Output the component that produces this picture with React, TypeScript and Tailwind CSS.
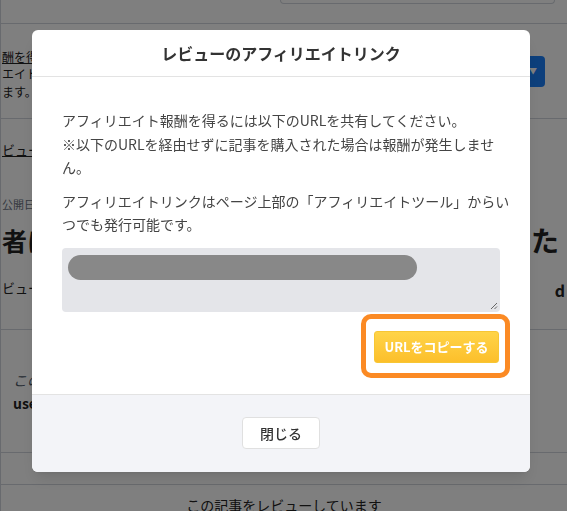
import React from "react";

const jp = "font-['Noto_Sans_CJK_JP','Noto_Sans',sans-serif]";

const BackgroundPage = () => {
  return (
    <div className="flex h-[511px] w-full flex-col overflow-hidden border-l border-gray-300 bg-white text-[#222]">
      <div className="flex h-[24px] shrink-0 justify-end border-b border-gray-300 pr-[12px]">
        <div className="h-[4px] w-[275px] rounded-b-md border-x border-b border-gray-300" />
      </div>
      <div className="flex h-[95px] shrink-0 items-center justify-between border-b border-gray-300 pr-[22px]">
        <div className="flex flex-col pl-[1px] pt-[6px] text-[12px] leading-[17.5px]">
          <span className="underline">酬を得るには以下のURL</span>
          <span>エイトリンク</span>
          <span>ます。</span>
        </div>
        <div className="flex h-[31px] w-[56px] items-center justify-end rounded-[4px] bg-[#1a7ff8] pr-[8px] text-[8px] text-white">
          ▼
        </div>
      </div>
      <div className="flex h-[211px] shrink-0 flex-col border-b border-gray-300 pl-[1px] pr-[8px]">
        <span className="mt-[21px] text-[13px] underline">ビュー記事</span>
        <span className="mt-[36px] text-[11px] text-gray-500">公開日</span>
        <div className="mt-[8px] flex justify-between text-[25px] font-bold leading-[40px]">
          <span>者に</span>
          <span className="text-[28px]">た</span>
        </div>
        <div className="mt-[18px] flex justify-between text-[13px]">
          <span>ビュー</span>
          <span className="-mr-[6px] text-[16px] font-bold">d</span>
        </div>
      </div>
      <div className="flex h-[123px] shrink-0 flex-col border-b border-gray-300 pl-[12px] pt-[40px]">
        <span className="text-[14px] italic text-gray-600">この記事</span>
        <span className="mt-[2px] text-[14px] font-bold">user</span>
      </div>
      <div className="h-[32px] shrink-0 border-b border-gray-300" />
      <div className="shrink-0 pt-[10px] text-center text-[14px]">この記事をレビューしています</div>
    </div>
  );
};

const ResizeGrip = () => (
  <svg className="absolute bottom-[2px] right-[2px]" width="8" height="8" viewBox="0 0 8 8">
    <path d="M7 1 L1 7 M7 4.5 L4.5 7" stroke="#666" strokeWidth="1" />
  </svg>
);

const AffiliateModal = () => {
  return (
    <div className="w-[498px] overflow-hidden rounded-md bg-white shadow-lg">
      <div className="flex h-[47px] items-center justify-center border-b border-[#e3e3e3]">
        <h2 className="text-[16px] font-bold text-[#333]">レビューのアフィリエイトリンク</h2>
      </div>
      <div className="px-[30px] pb-[31px] pt-[32px] text-[14px] leading-[23.5px] text-[#444]">
        <p>
          アフィリエイト報酬を得るには以下のURLを共有してください。
          <br />
          ※以下のURLを経由せずに記事を購入された場合は報酬が発生しませ
          <br />
          ん。
        </p>
        <p className="mt-[10px] whitespace-nowrap">
          アフィリエイトリンクはページ上部の「アフィリエイトツール」からい
          <br />
          つでも発行可能です。
        </p>
        <div className="relative mt-[11px] h-[64px] rounded-[4px] bg-[#e4e5e9] pl-[6px] pt-[7px]">
          <div className="h-[25px] w-[349px] rounded-full bg-[#888888]" />
          <ResizeGrip />
        </div>
        <div className="mt-[19px] flex justify-end pr-[1px]">
          <div className="relative">
            <button className="flex h-[32px] w-[125px] items-center justify-center rounded-[3px] border border-[#f7c634] bg-gradient-to-b from-[#ffd447] to-[#fcbf2a] text-[13px] font-bold text-white">
              URLをコピーする
            </button>
            <div className="absolute -bottom-[15px] -left-[13px] -right-[11px] -top-[17px] rounded-[10px] border-[5px] border-[#fb8a24]" />
          </div>
        </div>
      </div>
      <div className="flex h-[78px] items-center justify-center border-t border-[#e3e3e3] bg-[#f3f4f8]">
        <button className="h-[32px] w-[78px] rounded-[4px] border border-[#e0e0e0] bg-white text-[14px] font-medium text-[#333]">
          閉じる
        </button>
      </div>
    </div>
  );
};

export default function App() {
  return (
    <div className={`relative h-[511px] w-full overflow-hidden ${jp}`}>
      <BackgroundPage />
      <div className="fixed inset-0 flex items-start bg-black/50 pl-[32px] pt-[30px]">
        <AffiliateModal />
      </div>
    </div>
  );
}
